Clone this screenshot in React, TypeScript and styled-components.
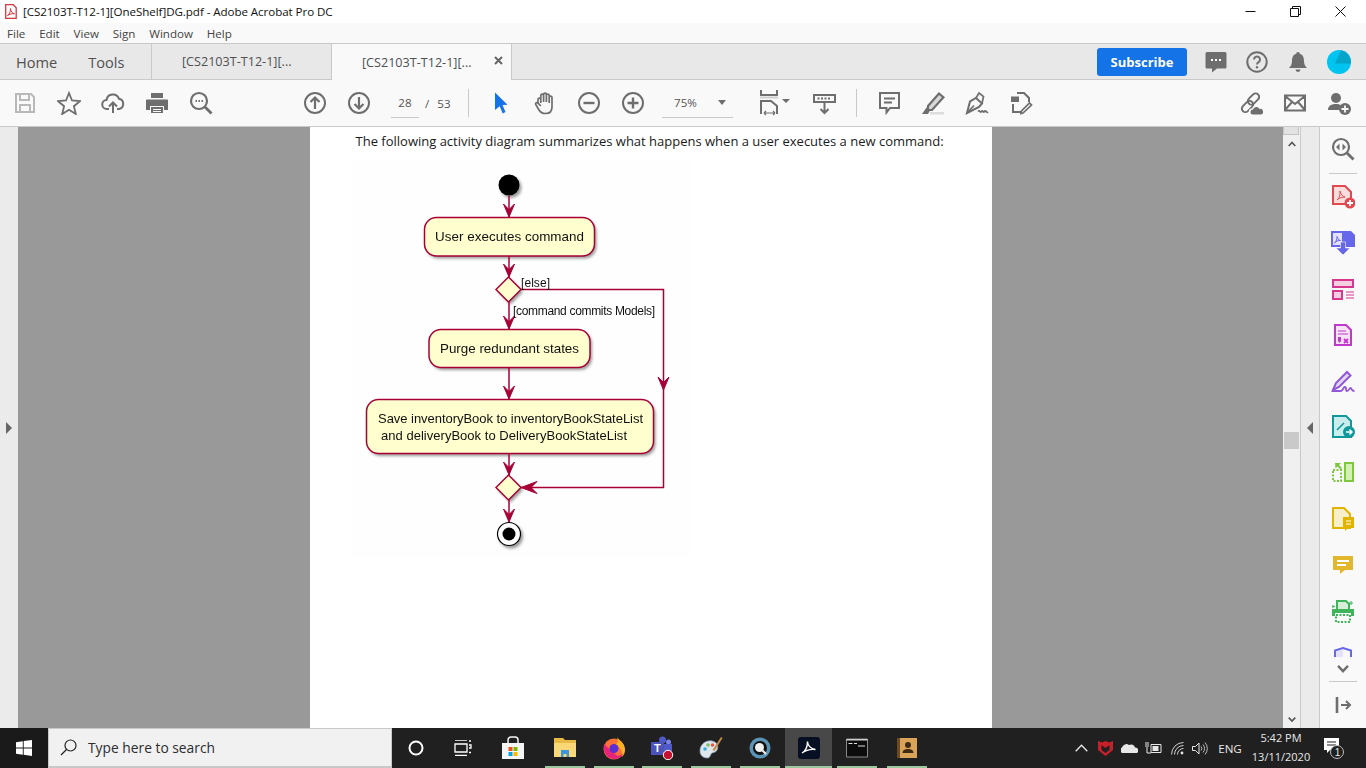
import React from 'react';
import styled, { createGlobalStyle } from 'styled-components';

const GlobalStyle = createGlobalStyle`
  html, body { margin: 0; padding: 0; height: 100%; overflow: hidden; }
  body { font-family: "Open Sans", "Noto Sans", sans-serif; background: #fff; }
  #root { height: 100%; }
`;

const GREY = '#6e6e6e';

const Shell = styled.div`
  width: 1366px;
  height: 768px;
  display: flex;
  flex-direction: column;
  overflow: hidden;
`;

/* ---- window chrome ---- */
const TitleBar = styled.div`
  height: 23px;
  background: #fff;
  display: flex;
  align-items: center;
  padding-left: 5px;
  flex: none;
`;
const TitleText = styled.span`
  margin-left: 6px;
  font-size: 11.6px;
  color: #111;
  letter-spacing: -0.07px;
  white-space: nowrap;
`;
const WindowButtons = styled.div`
  margin-left: auto;
  display: flex;
  align-items: center;
  padding-right: 3px;
`;
const WindowButton = styled.div`
  width: 45px;
  height: 20px;
  display: flex;
  align-items: center;
  justify-content: center;
`;
const MenuBar = styled.div`
  height: 21px;
  box-sizing: border-box;
  background: #f9f9f9;
  display: flex;
  align-items: center;
  padding-left: 7px;
  gap: 13.8px;
  flex: none;
  border-bottom: 1px solid #c9c9c9;
`;
const MenuItem = styled.span`
  font-size: 11.6px;
  color: #444;
`;
const TabBar = styled.div`
  height: 36px;
  box-sizing: border-box;
  background: #e8e8e8;
  display: flex;
  align-items: stretch;
  flex: none;
  border-bottom: 1px solid #c9c9c9;
`;
const NavTabs = styled.div`
  width: 152px;
  display: flex;
  align-items: center;
  padding-left: 16px;
  gap: 31px;
  box-sizing: border-box;
  border-right: 1px solid #c9c9c9;
`;
const NavTab = styled.span`
  font-size: 14.6px;
  color: #505050;
`;
const DocTab = styled.div<{ $active?: boolean }>`
  width: 180px;
  box-sizing: border-box;
  padding-left: 30px;
  display: flex;
  align-items: center;
  font-size: 12.6px;
  color: #505050;
  position: relative;
  background: ${p => (p.$active ? '#f9f9f9' : 'transparent')};
  border-right: 1px solid #c9c9c9;
  margin-bottom: ${p => (p.$active ? '-1px' : '0')};
`;
const TabClose = styled.span`
  position: absolute;
  right: 8px;
  top: 12px;
  display: flex;
`;
const TabActions = styled.div`
  margin-left: auto;
  display: flex;
  align-items: center;
  padding-right: 7px;
`;
const Subscribe = styled.button`
  width: 90px;
  height: 28px;
  border: none;
  border-radius: 3px;
  background: #1473e6;
  color: #fff;
  font-family: inherit;
  font-size: 13px;
  font-weight: 700;
  padding: 0;
  margin-right: 8px;
`;
const TabIcon = styled.div`
  width: 41px;
  display: flex;
  justify-content: center;
`;

const Toolbar = styled.div`
  height: 47px;
  box-sizing: border-box;
  background: #f9f9f9;
  display: flex;
  align-items: center;
  padding-left: 3px;
  flex: none;
  border-bottom: 1px solid #c9c9c9;
`;
const ToolGroup = styled.div<{ $gap?: number; $push?: boolean }>`
  display: flex;
  align-items: center;
  margin-left: ${p => (p.$push ? 'auto' : `${p.$gap ?? 0}px`)};
`;
const ToolSlot = styled.div`
  width: 44px;
  height: 30px;
  display: flex;
  align-items: center;
  justify-content: center;
`;
const Pager = styled.div`
  display: flex;
  align-items: center;
  width: 87px;
  box-sizing: border-box;
  padding-left: 10px;
  font-size: 11.6px;
  color: #555;
`;
const PageInput = styled.span`
  width: 28px;
  height: 29px;
  line-height: 29px;
  text-align: center;
  border-bottom: 1px solid #c9c9c9;
  margin-right: 6px;
`;
const PageTotal = styled.span`
  word-spacing: 5px;
`;
const ToolDivider = styled.div`
  width: 1px;
  height: 28px;
  background: #c9c9c9;
`;
const ZoomSelect = styled.div`
  width: 71px;
  height: 29px;
  box-sizing: border-box;
  border-bottom: 1px solid #c9c9c9;
  display: flex;
  align-items: center;
  justify-content: space-between;
  padding: 0 7px 0 12px;
  font-size: 11.6px;
  color: #555;
`;

/* ---- workspace ---- */
const Workspace = styled.div`
  flex: 1;
  min-height: 0;
  display: flex;
`;
const LeftRail = styled.div`
  width: 18px;
  background: #ebebeb;
  display: flex;
  align-items: center;
  justify-content: center;
  flex: none;
`;
const Canvas = styled.div`
  flex: 1;
  background: #999;
  display: flex;
  justify-content: center;
  min-width: 0;
`;
const Page = styled.div`
  width: 682px;
  height: 100%;
  background: #fff;
  box-sizing: border-box;
  padding: 5px 35px 0;
`;
const Lead = styled.p`
  margin: 0 0 10px 11px;
  font-size: 13px;
  line-height: 18px;
  color: #1a1a1a;
  white-space: nowrap;
`;
const Figure = styled.div`
  width: 338px;
  height: 397px;
  margin-left: 7px;
  background: #fefefe;
`;
const ScrollBar = styled.div`
  width: 17px;
  background: #f0f0f0;
  position: relative;
  flex: none;
  display: flex;
  flex-direction: column;
  align-items: center;
  justify-content: space-between;
  padding: 14px 0 5px;
  box-sizing: border-box;
`;
const TopStub = styled.div`
  position: absolute;
  top: 0;
  left: 0;
  width: 16px;
  height: 8px;
  background: #e2e2e2;
  border: 1px solid #c4c4c4;
  border-top: none;
  box-sizing: border-box;
`;
const Thumb = styled.div`
  position: absolute;
  top: 305px;
  left: 1px;
  width: 15px;
  height: 17px;
  background: #c9c9c9;
`;
const CollapseRail = styled.div`
  width: 18px;
  background: #ebebeb;
  border-left: 1px solid #c9c9c9;
  border-right: 1px solid #c9c9c9;
  display: flex;
  align-items: center;
  justify-content: center;
  flex: none;
`;
const Sidebar = styled.div`
  width: 46px;
  background: #f9f9f9;
  display: flex;
  flex-direction: column;
  align-items: center;
  padding-top: 8px;
  flex: none;
  box-sizing: border-box;
`;
const SideSlot = styled.div<{ $h?: number; $end?: boolean }>`
  width: 100%;
  height: ${p => p.$h ?? 46}px;
  display: flex;
  align-items: ${p => (p.$end ? 'flex-end' : 'center')};
  justify-content: center;
  flex: none;
  overflow: hidden;
`;
const SideRule = styled.div`
  width: 28px;
  height: 1px;
  background: #c9c9c9;
  flex: none;
`;

/* ---- taskbar ---- */
const Taskbar = styled.div`
  height: 40px;
  background: #202020;
  display: flex;
  align-items: stretch;
  flex: none;
  color: #fff;
`;
const StartButton = styled.div`
  width: 48px;
  background: #1a1a1a;
  display: flex;
  align-items: center;
  justify-content: center;
`;
const SearchBox = styled.div`
  width: 344px;
  background: #f1f1f1;
  border: 1px solid #c8c8c8;
  border-bottom-width: 2px;
  box-sizing: border-box;
  display: flex;
  align-items: center;
  padding-left: 11px;
  gap: 11px;
  font-size: 13.8px;
  color: #2d2d2d;
`;
const TaskSlot = styled.div<{ $w: number; $open?: boolean; $active?: boolean }>`
  width: ${p => p.$w}px;
  flex: none;
  display: flex;
  align-items: center;
  justify-content: center;
  position: relative;
  background: ${p => (p.$active ? '#484848' : 'transparent')};
  &::after {
    content: '';
    display: ${p => (p.$open ? 'block' : 'none')};
    position: absolute;
    bottom: 0;
    left: ${p => (p.$active ? 0 : (p.$w - 40) / 2)}px;
    right: ${p => (p.$active ? 0 : (p.$w - 40) / 2)}px;
    height: 2px;
    background: #9cc69c;
  }
`;
const Tray = styled.div`
  margin-left: auto;
  display: flex;
  align-items: center;
  padding-right: 14px;
`;
const TraySlot = styled.div<{ $w: number }>`
  width: ${p => p.$w}px;
  display: flex;
  align-items: center;
  justify-content: center;
`;
const Lang = styled.span`
  font-size: 11.6px;
  width: 36px;
  text-align: center;
  color: #e8e8e8;
`;
const Clock = styled.div`
  width: 66px;
  text-align: center;
  font-size: 11px;
  line-height: 19px;
  color: #e8e8e8;
  padding-bottom: 2px;
  white-space: nowrap;
`;

/* ---- drawn icons ---- */
type IconProps = { children: React.ReactNode; w?: number; h?: number; box?: string };
const Svg = ({ children, w = 24, h = 24, box }: IconProps) => (
  <svg width={w} height={h} viewBox={box ?? `0 0 ${w} ${h}`} fill="none" style={{ display: 'block' }}>
    {children}
  </svg>
);
const st = { stroke: GREY, strokeWidth: 2, fill: 'none' };

const PdfFile = () => (
  <Svg w={12} h={15}>
    <path d="M.7.7h7.5l3 3v10.6H.7z" fill="#fff" stroke="#d7373f" strokeWidth="1.3" />
    <path d="M2.5 11.5c2-1 3-4 3-7 .3 3 2 5 4 5.300-2.500-.3-5 .3-7 1.700z" stroke="#d7373f" />
  </Svg>
);

const toolIcons: Record<string, React.ReactNode> = {
  save: (
    <g stroke="#b9b9b9" strokeWidth="2">
      <path d="M3 3h15l3 3v15H3z" />
      <path d="M7 3v6h9V3M7 21v-7h10v7" />
    </g>
  ),
  star: <path d="M12 2l3 7.500 8 .6-6.100 5.100 1.900 7.800L12 18.700 5.200 23l1.900-7.800L1 10.100l8-.6z" {...st} strokeWidth={1.8} />,
  cloud: (
    <g {...st}>
      <path d="M8 18H6a4.500 4.500 0 0 1-.5-9A6.500 6.500 0 0 1 18 7.800 5.200 5.200 0 0 1 18 18h-2" />
      <path d="M12 22V12M8 15.500l4-4 4 4" />
    </g>
  ),
  print: (
    <g fill={GREY}>
      <path d="M6 2h12v5H6zM2 8.500h20c.6 0 1 .4 1 1V19h-4v-4H5v4H1V9.500c0-.6.4-1 1-1z" />
      <path d="M6 16h12v6H6z" />
      <path d="M8 18h8v1H8zM8 20h8v1H8z" fill="#f9f9f9" />
    </g>
  ),
  find: (
    <g>
      <circle cx="10" cy="10" r="8" {...st} strokeWidth={2.2} />
      <path d="M16 16l6.500 6.500" stroke={GREY} strokeWidth="2.800" />
      <path d="M6.500 10h1.500M9.500 10H11M12.500 10H14" stroke={GREY} strokeWidth="1.800" />
    </g>
  ),
  up: (
    <g {...st}>
      <circle cx="12" cy="12" r="10" />
      <path d="M12 18V7M7.500 11L12 6.500l4.500 4.500" strokeWidth={2.2} />
    </g>
  ),
  down: (
    <g {...st}>
      <circle cx="12" cy="12" r="10" />
      <path d="M12 6v11M7.500 13l4.500 4.500 4.500-4.500" strokeWidth={2.2} />
    </g>
  ),
  cursor: <path d="M6 1.500l12.500 12.200-5 .3 3 7-2.800 1.500-3-7.300L6 19z" fill="#1473e6" />,
  hand: (
    <path
      d="M5 13V8.500a1.400 1.400 0 0 1 2.800 0V12M7.800 11V4.500a1.400 1.400 0 0 1 2.800 0V11M10.600 11V3.500a1.400 1.400 0 0 1 2.800 0V11M13.400 11V4.500a1.400 1.400 0 0 1 2.800 0V12M16.200 12V6.500a1.400 1.400 0 0 1 2.800 0V16c0 4-2.500 6.500-6.500 6.500-3 0-5-1-6.500-3.500l-3.200-5.500c-.8-1.500 1.200-2.700 2.300-1.400L7.800 15"
      stroke={GREY}
      strokeWidth="1.700"
    />
  ),
  minus: (
    <g {...st}>
      <circle cx="12" cy="12" r="10" />
      <path d="M6.500 12h11" strokeWidth={2.4} />
    </g>
  ),
  plus: (
    <g {...st}>
      <circle cx="12" cy="12" r="10" />
      <path d="M6.500 12h11M12 6.500v11" strokeWidth={2.4} />
    </g>
  ),
  read: (
    <g>
      <path d="M2 4h21v7H2z" {...st} />
      <path d="M5.500 7.500h14" stroke={GREY} strokeWidth="2" strokeDasharray="2 1.500" />
      <path d="M12.500 12v10M8.500 18l4 4 4-4" {...st} />
    </g>
  ),
  comment: <path d="M3 2h19v15H13l-3.500 4.500V17H3zM7 7.500h11M7 11.500h8" {...st} />,
  pen: (
    <g>
      <path d="M7 15L18 2.500l4.500 3.800L11 19H7z" fill="#d8d8d8" stroke={GREY} strokeWidth="2.200" />
      <path d="M1 23l4.500-6.500 3.500 3-2 3.500z" fill={GREY} />
      <path d="M9 21h14v2.500H9z" fill="#dcdcdc" />
    </g>
  ),
  sign: (
    <g>
      <path d="M2 22l3-11.500 6-3.500 6 5.500-3 3.500z" {...st} />
      <path d="M11 7l3-5 4.500 3.500-1.500 7M2 22l7-7.500" {...st} strokeWidth={1.700} />
      <path d="M13 20.500c2-2 2 2 3.500 0s1.500 2 3 0 1.500 2 3.500.5" {...st} strokeWidth={1.700} />
    </g>
  ),
  edit: (
    <g>
      <path d="M8 2h7l5 5v4M4 13v8h8" {...st} />
      <path d="M2 5.500h8V11H2z" fill={GREY} />
      <path d="M14 22l-2 .5.500-2.500 8-8 2 2z" {...st} strokeWidth={1.700} />
    </g>
  ),
  link: (
    <g>
      <rect x="2" y="12" width="13" height="7" rx="3.500" transform="rotate(-45 8.500 15.500)" {...st} />
      <rect x="8" y="4.500" width="13" height="7" rx="3.500" transform="rotate(-45 14.500 8)" {...st} />
      <path d="M13 24a3.200 3.200 0 0 1 0-6.400 4.200 4.200 0 0 1 7.500-.8A3.700 3.700 0 0 1 24 24z" fill="#f9f9f9" />
      <path d="M14 23.500a2.500 2.500 0 0 1 0-5 3.500 3.500 0 0 1 6.500-.5 2.800 2.800 0 0 1 1.500 5.500z" fill={GREY} />
    </g>
  ),
  mail: <path d="M2 4.500h20v15H2zM2 5l10 8 10-8M2 19l7-8M22 19l-7-8" {...st} />,
  addUser: (
    <g>
      <circle cx="9" cy="7" r="5" fill={GREY} />
      <path d="M1 19c0-4 3-6 8-6 2 0 3.500.3 5 1.200A6 6 0 0 0 12.500 19z" fill={GREY} />
      <circle cx="18" cy="18" r="6" fill={GREY} />
      <path d="M14.500 18h7M18 14.500v7" stroke="#f9f9f9" strokeWidth="1.800" />
    </g>
  ),
};

const Tool = ({ name }: { name: string }) => (
  <ToolSlot>
    <Svg>{toolIcons[name]}</Svg>
  </ToolSlot>
);

const Caret = () => (
  <Svg w={8} h={5}>
    <path d="M0 0h8L4 5z" fill={GREY} />
  </Svg>
);

const FitIcon = () => (
  <Svg w={30} h={26}>
    <path d="M1 0v5h16V0" {...st} />
    <path d="M0 7.500h18" stroke="#cfcfcf" strokeWidth="2" />
    <path d="M1 24v-13h10l6 5v8" {...st} />
    <path d="M4 23h11M4 23l2-2M4 23l2 2M15 23l-2-2M15 23l-2 2" stroke={GREY} strokeWidth="1.200" />
    <path d="M22 9h8l-4 4z" fill={GREY} />
  </Svg>
);

const sideIcons: React.ReactNode[] = [
  <g key="a">
    <path d="M2 1h12l6 6v12H2z" fill="#f9dcdc" stroke="#e34850" strokeWidth="2" />
    <path d="M6 15c3-2 3-6 3-9 .5 3 3 6 5 6-3 0-6 1-8 3z" stroke="#e34850" />
    <circle cx="19" cy="18" r="5.500" fill="#e34850" />
    <path d="M16 18h6M19 15v6" stroke="#fff" strokeWidth="1.800" />
  </g>,
  <g key="b">
    <path d="M1 1h11v14H1z" fill="#e3e1fb" stroke="#6767ec" strokeWidth="2" />
    <path d="M3.500 12c2-1.500 2.500-4 2.500-6.500.5 2 1.500 3.500 3.500 4-2-.2-4.500.6-6 2.500z" stroke="#6767ec" />
    <path d="M13 0h7l4 4v12H13z" fill="#6767ec" />
    <path d="M9.500 11h5v6H19l-7 7-7-7h4.500z" fill="#6767ec" stroke="#f9f9f9" strokeWidth=".6" />
  </g>,
  <g key="c">
    <path d="M2 3h20v7H2z" fill="#f4cfe0" stroke="#d83790" strokeWidth="2" />
    <path d="M2 14h9v8H2z" fill="#f4cfe0" stroke="#d83790" strokeWidth="2" />
    <path d="M15 15h8M15 18h8M15 21h8" stroke="#d83790" strokeWidth="1.200" />
  </g>,
  <g key="d">
    <path d="M4 2h11l5 5v15H4z" fill="#f6e3f8" stroke="#c038cc" strokeWidth="2" />
    <path d="M7 8h8M7 11h10" stroke="#c038cc" />
    <path d="M7 14h3v4l-1.500 2L7 18z" fill="#c038cc" />
    <path d="M13 16l4 4M17 16l-4 4" stroke="#c038cc" strokeWidth="1.800" />
  </g>,
  <g key="e">
    <path d="M2 21l3-7L16 3l3.500 3.500L8 18z" fill="#e3d7f7" stroke="#9256d9" strokeWidth="2" />
    <path d="M1 22h9c2 0 2-4 4-4s0 4 2 4 2-3 3.500-3 .5 3 4 3" stroke="#9256d9" strokeWidth="1.800" />
  </g>,
  <g key="f">
    <path d="M2 1h13l5 5v16H2z" fill="#c9ecec" stroke="#12989b" strokeWidth="2" />
    <path d="M6 15l7-7" stroke="#12989b" strokeWidth="1.600" />
    <circle cx="18" cy="17" r="6" fill="#12989b" />
    <path d="M15 17h5M18.500 14.500L21 17l-2.500 2.500" stroke="#fff" strokeWidth="1.500" />
  </g>,
  <g key="g">
    <path d="M14 2h8v18h-8z" fill="#d5f0b5" stroke="#7fc73f" strokeWidth="2" />
    <path d="M2 9h8v11H2z" stroke="#7fc73f" strokeWidth="2" strokeDasharray="2 1.500" />
    <path d="M4 2h6l-2 2 3 3-1.500 1.500-3-3-2 2z" fill="#7fc73f" />
  </g>,
  <g key="h">
    <path d="M2 1h11l6 6v14H2z" fill="#f7efc9" stroke="#e0b400" strokeWidth="2" />
    <path d="M12 10h11v11h-6l-3 3v-3h-2z" fill="#e0b400" />
    <path d="M15 14h5M15 17h5" stroke="#fff" />
  </g>,
  <g key="i">
    <path d="M2 3h20v14h-8l-5 4v-4H2z" fill="#e2b72c" />
    <path d="M6 8h12M6 12h9" stroke="#fff" strokeWidth="1.800" />
  </g>,
  <g key="j">
    <path d="M6 11V2h9l3 3v6" fill="#d7efd9" stroke="#3fb45a" strokeWidth="2" />
    <path d="M1 10h22v7h-3v-3H4v3H1z" fill="#3fb45a" />
    <path d="M5 16h14v7H5z" stroke="#3fb45a" strokeWidth="2" strokeDasharray="2 1.500" />
    <path d="M20 2v4M18 4h4M2 6v3M1 7.500h3" stroke="#3fb45a" />
  </g>,
];

const sideTop = (
  <Svg>
    <circle cx="10" cy="10" r="8" stroke={GREY} strokeWidth="2.200" />
    <path d="M16 16l6.500 6.500" stroke={GREY} strokeWidth="2.800" />
    <path d="M8.500 6.500L5 10l3.500 3.500zM11.500 6.500L15 10l-3.500 3.500z" fill={GREY} />
  </Svg>
);

const Chevron = ({ up, color = '#555', w = 8 }: { up?: boolean; color?: string; w?: number }) => (
  <svg width={w} height={w * 0.7} viewBox="0 0 8 5.600" fill="none" style={{ display: 'block' }}>
    <path d={up ? 'M.7 5L4 1.500 7.300 5' : 'M.7 .6L4 4.100 7.300 .6'} stroke={color} strokeWidth="1.600" />
  </svg>
);

const Triangle = ({ left }: { left?: boolean }) => (
  <Svg w={6} h={12}>
    <path d={left ? 'M6 0v12L0 6z' : 'M0 0v12l6-6z'} fill="#666" />
  </Svg>
);

/* ---- activity diagram ---- */
const INK = '#A80036';
const FILL = '#FEFECE';

const DiagramText = styled.text`
  font-family: "Liberation Sans", Arial, sans-serif;
  fill: #111;
`;
const DiagramSvg = styled.svg`
  display: block;
  filter: blur(0.35px);
`;

const boxes = [
  { x: 424.5, y: 217.5, w: 170, h: 38.5 },
  { x: 429, y: 329.5, w: 161, h: 38 },
  { x: 366.5, y: 399.5, w: 287, h: 54 },
];
const lines = [
  'M509 196V217',
  'M509 256V277',
  'M509 302V329',
  'M509 367V399',
  'M509 453V475',
  'M509 500V522',
  'M521 289.500H663.500V487.500H521',
];
const downArrows: [number, number][] = [
  [509, 217],
  [509, 277],
  [509, 329],
  [509, 399],
  [509, 475],
  [509, 522],
  [663.5, 390],
];
const labels = [
  { text: 'User executes command', x: 435, y: 241, w: 149, size: 13.4 },
  { text: 'Purge redundant states', x: 440, y: 353, w: 139, size: 13.4 },
  { text: 'Save inventoryBook to inventoryBookStateList', x: 378, y: 423, w: 265, size: 13 },
  { text: 'and deliveryBook to DeliveryBookStateList', x: 381, y: 440, w: 246, size: 13 },
  { text: '[else]', x: 521, y: 287, w: 29, size: 12 },
  { text: '[command commits Models]', x: 513, y: 315, w: 142, size: 12 },
];

const Diagram = () => (
  <DiagramSvg width={338} height={397} viewBox="352 160 338 397">
    <defs>
      <filter id="soft" x="-20%" y="-20%" width="150%" height="150%">
        <feGaussianBlur stdDeviation="1.500" />
      </filter>
    </defs>
    <g fill="#000" opacity="0.4" filter="url(#soft)" transform="translate(2 2.500)">
      {boxes.map(b => (
        <rect key={b.x} x={b.x} y={b.y} width={b.w} height={b.h} rx={12} />
      ))}
      <circle cx={509} cy={185} r={10.5} />
      <circle cx={509} cy={534} r={12} />
      <path d="M496 289.500L508.500 277 521 289.500 508.500 302zM496 487.500L508.500 475 521 487.500 508.500 500z" />
    </g>
    {lines.map(d => (
      <path key={d} d={d} fill="none" stroke={INK} strokeWidth={1.5} />
    ))}
    {downArrows.map(([x, y]) => (
      <path key={`${x}-${y}`} d={`M${x} ${y}l-5.500-13 5.500 5.500 5.500-5.500z`} fill={INK} stroke={INK} />
    ))}
    <path d="M521 487.500l16-6-6 6 6 6z" fill={INK} stroke={INK} />
    <circle cx={509} cy={185} r={10.5} fill="#000" />
    {boxes.map(b => (
      <rect key={b.x} x={b.x} y={b.y} width={b.w} height={b.h} rx={12} fill={FILL} stroke={INK} strokeWidth={1.5} />
    ))}
    <path
      d="M496 289.500L508.500 277 521 289.500 508.500 302zM496 487.500L508.500 475 521 487.500 508.500 500z"
      fill={FILL}
      stroke={INK}
      strokeWidth={1.5}
    />
    <circle cx={509} cy={534} r={11.5} fill="#fff" stroke="#000" strokeWidth={1.2} />
    <circle cx={509} cy={534} r={6.500} fill="#000" />
    {labels.map(l => (
      <DiagramText key={l.text} x={l.x} y={l.y} fontSize={l.size} textLength={l.w} lengthAdjust="spacing">
        {l.text}
      </DiagramText>
    ))}
  </DiagramSvg>
);

/* ---- taskbar icons ---- */
const WinLogo = () => (
  <Svg w={16} h={16}>
    <path d="M0 2.300l6.800-1v6.300H0zM7.700 1.100L16 0v7.600H7.700zM0 8.400h6.800v6.300L0 13.700zM7.700 8.400H16V16l-8.300-1.200z" fill="#fff" />
  </Svg>
);

const taskIcons: { w: number; open?: boolean; active?: boolean; icon: React.ReactNode }[] = [
  {
    w: 47,
    icon: (
      <Svg>
        <circle cx="12" cy="12" r="6.500" stroke="#fff" strokeWidth="2" />
      </Svg>
    ),
  },
  {
    w: 47,
    icon: (
      <Svg w={18} h={16}>
        <path d="M1 0h12M1 15.500h12M1 4h12v8H1zM15 1h2M15 5h2v3h-2M15 12.500h2" stroke="#fff" strokeWidth="1.300" />
      </Svg>
    ),
  },
  {
    w: 54,
    icon: (
      <Svg>
        <path d="M1 7h22v16H1z" fill="#f5f5f5" />
        <path d="M7 9V4a3 3 0 0 1 3-3h4a3 3 0 0 1 3 3v5" stroke="#f5f5f5" strokeWidth="1.500" />
        <path d="M7.500 11h4v4h-4z" fill="#f25022" />
        <path d="M12.500 11h4v4h-4z" fill="#7fba00" />
        <path d="M7.500 16h4v4h-4z" fill="#00a4ef" />
        <path d="M12.500 16h4v4h-4z" fill="#ffb900" />
      </Svg>
    ),
  },
  {
    w: 49,
    open: true,
    icon: (
      <Svg>
        <path d="M1 2h9l2 2h11v17H1z" fill="#e9bb45" />
        <path d="M1 7h22v14H1z" fill="#fad777" />
        <path d="M8 21v-7h8v7h-2.500v-3h-3v3z" fill="#3a96dd" />
      </Svg>
    ),
  },
  {
    w: 49,
    open: true,
    icon: (
      <Svg>
        <circle cx="12" cy="13" r="10.500" fill="#ff7139" />
        <path d="M15 0c.5 4 7.500 6 8 13 .3 3-1 6-3 8 1-6-2-11-7-12 3-1 3-6 2-9z" fill="#ffb21f" />
        <path d="M2 8c-1.500 6 2 15 10 15 4 0 8-2 9-6-1 2-4 3-6.500 2.500" fill="#e31587" opacity=".85" />
        <circle cx="12" cy="12.500" r="4.500" fill="#5b2fd1" />
      </Svg>
    ),
  },
  {
    w: 48,
    open: true,
    icon: (
      <Svg>
        <circle cx="18.500" cy="6" r="2.500" fill="#7b83eb" />
        <circle cx="12.500" cy="4" r="3.500" fill="#5059c9" />
        <path d="M10 8h12v10H10z" fill="#5059c9" />
        <path d="M1 6h13v13H1z" fill="#4b53bc" />
        <text x="4" y="16" fontFamily="Liberation Sans" fontSize="11" fontWeight="700" fill="#fff">T</text>
        <circle cx="18" cy="19" r="4.700" fill="#c4122f" stroke="#fff" />
      </Svg>
    ),
  },
  {
    w: 49,
    open: true,
    icon: (
      <Svg>
        <path d="M1 15C1 8 7 4 13 5c5 1 7 5 5 9-1 3-5 2-6 4s-1 4-4 4c-4 0-7-3-7-7z" fill="#dfe7ee" stroke="#8ba5b8" strokeWidth=".8" />
        <circle cx="6" cy="13" r="1.800" fill="#3fa9d8" />
        <circle cx="9" cy="9" r="1.800" fill="#7cc05a" />
        <circle cx="13.500" cy="9" r="1.800" fill="#e0574f" />
        <path d="M22 1l1.500 1-8 13-2-1z" fill="#c58b4a" />
      </Svg>
    ),
  },
  {
    w: 50,
    open: true,
    icon: (
      <Svg>
        <circle cx="12" cy="12" r="10.500" fill="#5b93b5" />
        <circle cx="12" cy="12" r="7" fill="#101010" />
        <circle cx="11.500" cy="11.500" r="4.500" fill="#f0f0f0" />
        <path d="M14 14l4 4" stroke="#f0f0f0" strokeWidth="2" />
      </Svg>
    ),
  },
  {
    w: 47,
    open: true,
    active: true,
    icon: (
      <Svg>
        <rect x="1" y="1" width="22" height="22" rx="3" fill="#061022" />
        <path d="M5 17c3.500-2 5.500-7 5.500-11.500 0 3.500 3 7.500 8 8-4-.5-9.500 .5-13.500 3.500z" stroke="#fff" strokeWidth="1.400" />
      </Svg>
    ),
  },
  {
    w: 50,
    open: true,
    icon: (
      <Svg>
        <path d="M1.500 3h21v18h-21z" fill="#0c0c0c" stroke="#8a8a8a" />
        <path d="M1.500 3h21v1.500h-21z" fill="#cfcfcf" />
        <path d="M3.500 7.500h4M9 7.500h3M13 10h7" stroke="#e0e0e0" />
      </Svg>
    ),
  },
  {
    w: 50,
    open: true,
    icon: (
      <Svg>
        <path d="M2 2h20v20H2z" fill="#d9a458" />
        <path d="M2 2h3v20H2z" fill="#6b4a24" />
        <circle cx="13" cy="9" r="3" fill="#3f2b14" />
        <path d="M7.500 17c0-3 2.500-4 5.500-4s5.500 1 5.500 4z" fill="#3f2b14" />
      </Svg>
    ),
  },
];

const trayIcons: { w: number; icon: React.ReactNode }[] = [
  {
    w: 18,
    icon: (
      <Svg w={13} h={8}>
        <path d="M.7 7.300L6.500 1.300l5.800 6" stroke="#e8e8e8" strokeWidth="1.300" />
      </Svg>
    ),
  },
  {
    w: 30,
    icon: (
      <Svg w={15} h={16}>
        <path d="M0 1l4 1.500L7.500 1 11 2.500 15 1v9l-7.500 6L0 10z" fill="#c8202b" />
        <path d="M3.500 5v5l4 3 4-3V5L7.500 8z" fill="#202020" />
      </Svg>
    ),
  },
  {
    w: 18,
    icon: (
      <Svg w={17} h={10}>
        <path d="M1 10a3 3 0 0 1 0-5.500 4.500 4.500 0 0 1 7-2.500 4 4 0 0 1 6 2.500 3 3 0 0 1 2 5.500z" fill="#e8e8e8" />
      </Svg>
    ),
  },
  {
    w: 30,
    icon: (
      <Svg w={17} h={12}>
        <path d="M6 2.500h10v8H6z" stroke="#e8e8e8" />
        <path d="M7.500 4h6v5h-6z" fill="#e8e8e8" />
        <path d="M0 4h4M1 0v3M3 0v3M2 5v6h4" stroke="#e8e8e8" />
      </Svg>
    ),
  },
  {
    w: 20,
    icon: (
      <Svg w={14} h={13}>
        <path d="M.5 12.500a12 12 0 0 1 12-12M3.500 12.500a9 9 0 0 1 9-9M6.500 12.500a6 6 0 0 1 6-6" stroke="#cfcfcf" />
        <circle cx="11" cy="11" r="1.400" fill="#e8e8e8" />
      </Svg>
    ),
  },
  {
    w: 24,
    icon: (
      <Svg w={16} h={13}>
        <path d="M.5 4.500h3L7 1v11L3.500 8.500h-3z" stroke="#e8e8e8" />
        <path d="M9 4.500a3 3 0 0 1 0 4M11 2.500a6 6 0 0 1 0 8M13 .5a9 9 0 0 1 0 12" stroke="#bdbdbd" />
      </Svg>
    ),
  },
];

const App: React.FC = () => (
  <Shell>
    <GlobalStyle />
    <TitleBar>
      <PdfFile />
      <TitleText>[CS2103T-T12-1][OneShelf]DG.pdf - Adobe Acrobat Pro DC</TitleText>
      <WindowButtons>
        <WindowButton>
          <Svg w={11} h={11}>
            <path d="M.5 5.500h10" stroke="#111" />
          </Svg>
        </WindowButton>
        <WindowButton>
          <Svg w={11} h={11}>
            <path d="M.5 2.500h8v8h-8zM2.500 2.500V.5h8v8h-2" stroke="#111" />
          </Svg>
        </WindowButton>
        <WindowButton>
          <Svg w={11} h={11}>
            <path d="M.5.5l10 10M10.500.5l-10 10" stroke="#111" />
          </Svg>
        </WindowButton>
      </WindowButtons>
    </TitleBar>
    <MenuBar>
      {['File', 'Edit', 'View', 'Sign', 'Window', 'Help'].map(m => (
        <MenuItem key={m}>{m}</MenuItem>
      ))}
    </MenuBar>
    <TabBar>
      <NavTabs>
        <NavTab>Home</NavTab>
        <NavTab>Tools</NavTab>
      </NavTabs>
      <DocTab>[CS2103T-T12-1][...</DocTab>
      <DocTab $active>
        [CS2103T-T12-1][...
        <TabClose>
          <Svg w={9} h={9}>
            <path d="M1 1l7 7M8 1L1 8" stroke="#666" strokeWidth="2" />
          </Svg>
        </TabClose>
      </DocTab>
      <TabActions>
        <Subscribe>Subscribe</Subscribe>
        <TabIcon>
          <Svg w={22} h={22}>
            <path d="M2 1h18a1.500 1.500 0 0 1 1.500 1.500V16a1.500 1.500 0 0 1-1.500 1.500h-8L7 21.500v-4H2A1.500 1.500 0 0 1 .5 16V2.500A1.500 1.500 0 0 1 2 1z" fill={GREY} />
            <path d="M6 9h2M10 9h2M14 9h2" stroke="#fff" strokeWidth="1.800" />
          </Svg>
        </TabIcon>
        <TabIcon>
          <Svg w={22} h={22}>
            <circle cx="11" cy="11" r="9.700" stroke={GREY} strokeWidth="2" />
            <path d="M8 8.500a3 3 0 1 1 4.500 2.600c-1 .6-1.500 1.200-1.500 2.400" stroke={GREY} strokeWidth="2" />
            <circle cx="11" cy="16.300" r="1.200" fill={GREY} />
          </Svg>
        </TabIcon>
        <TabIcon>
          <Svg w={18} h={22}>
            <path d="M9 1a1.800 1.800 0 0 1 1.800 1.800C14 3.800 15 6.500 15 10c0 3 1 5 3 7H0c2-2 3-4 3-7 0-3.500 1-6.200 4.200-7.200A1.800 1.800 0 0 1 9 1z" fill={GREY} />
            <path d="M6.500 18.500h5a2.500 2.500 0 0 1-5 0z" fill={GREY} />
          </Svg>
        </TabIcon>
        <TabIcon>
          <Svg>
            <circle cx="12" cy="12" r="12" fill="#00c4f0" />
            <path d="M14 .3A12 12 0 0 1 24 12v1.500H8z" fill="#05a4c9" />
          </Svg>
        </TabIcon>
      </TabActions>
    </TabBar>
    <Toolbar>
      <ToolGroup>
        {['save', 'star', 'cloud', 'print', 'find'].map(n => (
          <Tool key={n} name={n} />
        ))}
      </ToolGroup>
      <ToolGroup $gap={70}>
        <Tool name="up" />
        <Tool name="down" />
      </ToolGroup>
      <Pager>
        <PageInput>28</PageInput>
        <PageTotal>/ 53</PageTotal>
      </Pager>
      <ToolDivider />
      <ToolGroup $gap={10}>
        {['cursor', 'hand', 'minus', 'plus'].map(n => (
          <Tool key={n} name={n} />
        ))}
      </ToolGroup>
      <ToolGroup $gap={7}>
        <ZoomSelect>
          75%
          <Caret />
        </ZoomSelect>
      </ToolGroup>
      <ToolGroup $gap={20}>
        <ToolSlot>
          <FitIcon />
        </ToolSlot>
      </ToolGroup>
      <ToolGroup $gap={5}>
        <Tool name="read" />
      </ToolGroup>
      <ToolGroup $gap={10}>
        <ToolDivider />
      </ToolGroup>
      <ToolGroup $gap={10}>
        {['comment', 'pen', 'sign', 'edit'].map(n => (
          <Tool key={n} name={n} />
        ))}
      </ToolGroup>
      <ToolGroup $push>
        {['link', 'mail', 'addUser'].map(n => (
          <Tool key={n} name={n} />
        ))}
      </ToolGroup>
      <ToolGroup $gap={5} />
    </Toolbar>
    <Workspace>
      <LeftRail>
        <Triangle />
      </LeftRail>
      <Canvas>
        <Page>
          <Lead>The following activity diagram summarizes what happens when a user executes a new command:</Lead>
          <Figure>
            <Diagram />
          </Figure>
        </Page>
      </Canvas>
      <ScrollBar>
        <TopStub />
        <Chevron up />
        <Thumb />
        <Chevron />
      </ScrollBar>
      <CollapseRail>
        <Triangle left />
      </CollapseRail>
      <Sidebar>
        <SideSlot $h={28}>{sideTop}</SideSlot>
        <SideSlot $h={10} />
        <SideRule />
        {sideIcons.map((icon, i) => (
          <SideSlot key={i}>
            <Svg>{icon}</Svg>
          </SideSlot>
        ))}
        <SideSlot $h={23} $end>
          <Svg w={20} h={10}>
            <path d="M2 10V3.500L10 1l8 2.500V10" stroke="#6767ec" strokeWidth="2" />
            <path d="M3 10V4.500L10 2.500V10z" fill="#e3e1fb" />
          </Svg>
        </SideSlot>
        <SideSlot $h={24}>
          <Chevron w={12} color={GREY} />
        </SideSlot>
        <SideRule />
        <SideSlot>
          <Svg w={18} h={18}>
            <path d="M3 1v16" stroke={GREY} strokeWidth="2.600" />
            <path d="M7 9h9M12 5l4 4-4 4" stroke={GREY} strokeWidth="2" />
          </Svg>
        </SideSlot>
      </Sidebar>
    </Workspace>
    <Taskbar>
      <StartButton>
        <WinLogo />
      </StartButton>
      <SearchBox>
        <Svg w={17} h={17}>
          <circle cx="10.500" cy="6.500" r="5.500" stroke="#222" strokeWidth="1.200" />
          <path d="M6.500 10.500L1 16" stroke="#222" strokeWidth="1.300" />
        </Svg>
        Type here to search
      </SearchBox>
      {taskIcons.map((t, i) => (
        <TaskSlot key={i} $w={t.w} $open={t.open} $active={t.active}>
          {t.icon}
        </TaskSlot>
      ))}
      <Tray>
        {trayIcons.map((t, i) => (
          <TraySlot key={i} $w={t.w}>
            {t.icon}
          </TraySlot>
        ))}
        <Lang>ENG</Lang>
        <Clock>
          5:42 PM
          <br />
          13/11/2020
        </Clock>
        <TraySlot $w={38}>
          <Svg w={22} h={22}>
            <path d="M2 1h15v12H8l-3 3v-3H2z" fill="#fff" />
            <path d="M5 5h9M5 8h9" stroke="#202020" />
            <circle cx="15" cy="15" r="6.500" fill="#202020" stroke="#bdbdbd" />
            <text x="12.700" y="18.500" fontFamily="Liberation Sans" fontSize="10" fill="#e8e8e8">1</text>
          </Svg>
        </TraySlot>
      </Tray>
    </Taskbar>
  </Shell>
);

export default App;
